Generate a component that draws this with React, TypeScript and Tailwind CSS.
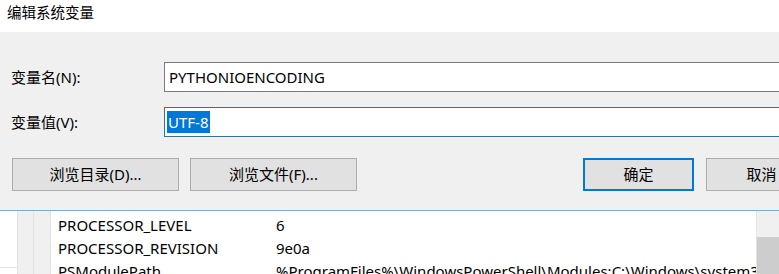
const UI_FONT = "font-['Noto_Sans','Noto_Sans_CJK_SC',sans-serif]";

const ROWS = [
  { name: "PROCESSOR_LEVEL", value: "6" },
  { name: "PROCESSOR_REVISION", value: "9e0a" },
  { name: "PSModulePath", value: "%ProgramFiles%\\WindowsPowerShell\\Modules;C:\\Windows\\system32\\WindowsPowerShell" },
];

function DialogButton({ label, primary, wide }: { label: string; primary?: boolean; wide?: boolean }) {
  const size = wide ? "w-[167px]" : "w-[111px]";
  return (
    <button
      className={
        primary
          ? `flex h-[33px] ${size} shrink-0 items-center justify-center border-2 border-[#0078d7] bg-[#e1e1e1] text-[15px] text-black`
          : `flex h-[33px] ${size} shrink-0 items-center justify-center border border-[#adadad] bg-[#e1e1e1] text-[15px] text-black`
      }
    >
      {label}
    </button>
  );
}

export default function App() {
  return (
    <div className={`h-[274px] w-[779px] overflow-hidden bg-[#f0f0f0] ${UI_FONT}`}>
      {/* Title bar */}
      <div className="flex h-[32px] items-start bg-white pl-[7px] pt-[2px] text-[14.5px] text-black">
        编辑系统变量
      </div>

      {/* Fields */}
      <div className="flex flex-col gap-[15px] pt-[30px]">
        <div className="flex items-center pl-[11px]">
          <span className="w-[153px] shrink-0 text-[15px] text-black">变量名(N):</span>
          <div className="flex h-[30px] w-[640px] shrink-0 items-center border border-[#7a7a7a] bg-white pl-[4px] text-[15px] text-black">
            PYTHONIOENCODING
          </div>
        </div>
        <div className="flex items-center pl-[11px]">
          <span className="w-[153px] shrink-0 text-[15px] text-black">变量值(V):</span>
          <div className="flex h-[30px] w-[640px] shrink-0 items-center border border-[#3c6f93] bg-white pl-[2px] text-[15px]">
            <span className="bg-[#0078d7] px-[1px] leading-[22px] text-white">UTF-8</span>
          </div>
        </div>
      </div>

      {/* Buttons */}
      <div className="flex pl-[12px] pt-[21px]">
        <DialogButton label="浏览目录(D)..." wide />
        <div className="w-[11px] shrink-0" />
        <DialogButton label="浏览文件(F)..." wide />
        <div className="w-[226px] shrink-0" />
        <DialogButton label="确定" primary />
        <div className="w-[12px] shrink-0" />
        <DialogButton label="取消" />
      </div>

      {/* List behind */}
      <div className="mt-[19px] flex h-[64px] border-t border-[#86a9c6] bg-white">
        <div className="flex w-[17px] shrink-0 flex-col">
          <div className="h-[57px] border-b border-[#e3e3e3]" />
        </div>
        <div className="w-[17px] shrink-0 border-x border-[#e3e3e3] bg-[#f0f0f0]" />
        <div className="w-[17px] shrink-0 border-r border-[#e3e3e3] bg-[#f0f0f0]" />
        <div className="flex min-w-0 flex-1 flex-col overflow-hidden pl-[7px] pt-[3px] text-[15px] text-black">
          {ROWS.map((r) => (
            <div key={r.name} className="flex h-[23px] shrink-0 items-center whitespace-nowrap">
              <span className="w-[218px] shrink-0">{r.name}</span>
              <span>{r.value}</span>
            </div>
          ))}
        </div>
        <div className="flex w-[23px] shrink-0 flex-col border-l border-[#e3e3e3] bg-[#f0f0f0]">
          <div className="h-[26px]" />
          <div className="flex-1 bg-[#cdcdcd]" />
        </div>
      </div>
    </div>
  );
}
